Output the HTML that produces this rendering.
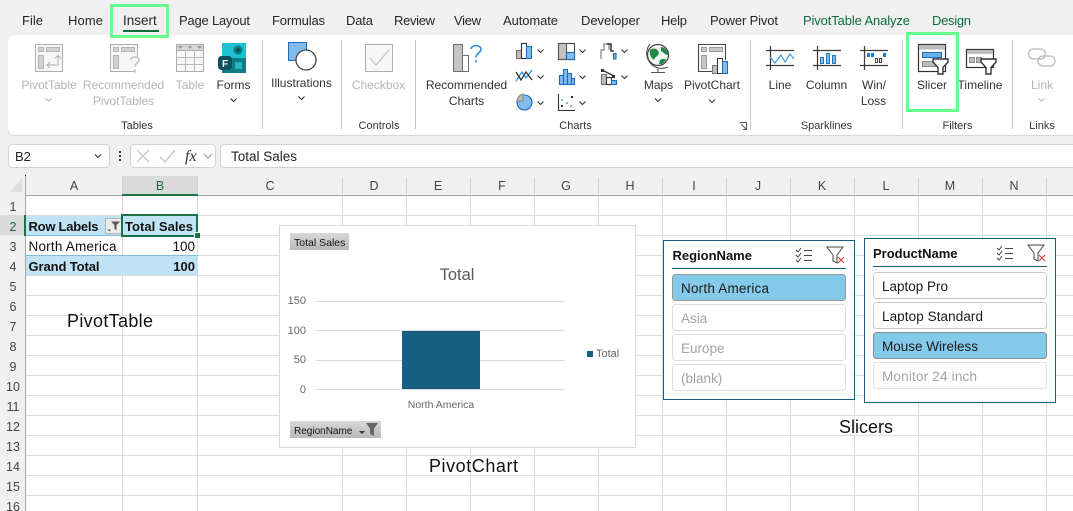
<!DOCTYPE html>
<html lang="en"><head><meta charset="utf-8"><title>Excel PivotTable</title>
<style>
html,body{margin:0;padding:0;width:1073px;height:511px;overflow:hidden;background:#f0f0f0}
svg{display:block}
text{font-family:"Liberation Sans",sans-serif;white-space:pre}
.tab{font-size:13px;fill:#262626}
.rb{font-size:12px;fill:#333;text-anchor:middle}
.dis{font-size:12px;fill:#b4b4b4;text-anchor:middle}
.gr{font-size:11px;fill:#333;text-anchor:middle}
.hd{font-size:12.5px;fill:#444;text-anchor:middle}
.c{font-size:13.5px;fill:#111}
.b{font-size:13px;fill:#111;font-weight:bold}
.ax{font-size:11px;fill:#666}
.sl{font-size:13.5px;fill:#1a1a1a}
.sd{font-size:13.5px;fill:#a3a3a3}
.big{font-size:18px;fill:#111;text-anchor:middle}
</style></head><body>
<svg width="1073" height="511" viewBox="0 0 1073 511" xmlns="http://www.w3.org/2000/svg">
<defs>
<path id="ch" d="M-3-1.500 0 1.500 3-1.500" fill="none" stroke="#333" stroke-width="1.100"/>
<path id="chg" d="M-3-1.500 0 1 3-1.500" fill="none" stroke="#b5b5b5" stroke-width="1.100"/>
<g id="funnel"><path d="M0 0H15V3L10 8.500V15H5V8.500L0 3Z" fill="#fff" stroke="#333" stroke-width="1.400"/></g>
<g id="sfx" fill="none" stroke-width="1"><path d="M0 0H16L10 8V16L6 14V8Z" stroke="#444"/><path d="M11 10l6 6M17 10l-6 6" stroke="#e8404a" stroke-width="1.200"/></g>
<g id="clr" fill="none" stroke="#444" stroke-width="1"><path d="M0 2l2 2 3-4M0 7l2 2 3-4M0 12l2 2 3-4"/><path d="M8 2.500H16M8 7.500H16M8 12.500H16"/></g>
<linearGradient id="btn" x1="0" y1="0" x2="0" y2="1"><stop offset="0" stop-color="#d8d8d8"/><stop offset="1" stop-color="#b8b8b8"/></linearGradient>
</defs>

<rect width="1073" height="511" fill="#f0f0f0"/>

<!-- tabs -->
<text class="tab" x="22" y="25">File</text>
<text class="tab" x="68" y="25" textLength="35">Home</text>
<text class="tab" x="123" y="25" style="font-size:13.500px">Insert</text>
<text class="tab" x="179" y="25" textLength="71">Page Layout</text>
<text class="tab" x="272" y="25" textLength="53">Formulas</text>
<text class="tab" x="346" y="25" textLength="27">Data</text>
<text class="tab" x="394" y="25" textLength="41">Review</text>
<text class="tab" x="454" y="25" textLength="27">View</text>
<text class="tab" x="503" y="25" textLength="55">Automate</text>
<text class="tab" x="581" y="25" textLength="59">Developer</text>
<text class="tab" x="661" y="25" textLength="26">Help</text>
<text class="tab" x="710" y="25" textLength="68">Power Pivot</text>
<text class="tab" x="803" y="25" textLength="107" style="fill:#0e6b3c">PivotTable Analyze</text>
<text class="tab" x="932" y="25" textLength="39" style="fill:#0e6b3c">Design</text>
<rect x="123" y="30" width="36" height="2" fill="#0e6b3c"/>

<!-- ribbon panel -->
<rect x="8" y="35" width="1080" height="100" rx="7" fill="#fff"/>
<path d="M8 130Q8 135.500 15 135.500H1073" fill="none" stroke="#d8d8d8"/>
<g stroke="#c9c9c9"><path d="M262.500 40V129M341.500 40V129M415.500 40V129M750.500 40V129M902.500 40V129M1012.500 40V129"/></g>

<!-- PivotTable icon -->
<g>
<rect x="35.500" y="44.500" width="27" height="27" fill="#f7f7f7" stroke="#aeaeae"/>
<g fill="#d2d2d2" stroke="#b5b5b5"><rect x="38.500" y="47.500" width="5" height="4"/><rect x="46.500" y="47.500" width="13" height="4"/><rect x="38.500" y="55.500" width="5" height="13"/></g>
<path d="M47 65H58V56M55 58.500 58 55.500 61 58.500M50 62 47 65 50 68" fill="none" stroke="#b0b0b0"/>
</g>
<!-- Recommended PivotTables icon -->
<g>
<path d="M134 71.500H110.500V44.500H137.500V58" fill="#f7f7f7" stroke="#aeaeae"/>
<g fill="#d2d2d2" stroke="#b5b5b5"><rect x="113.500" y="47.500" width="5" height="4"/><rect x="121.500" y="47.500" width="13" height="4"/><rect x="113.500" y="55.500" width="5" height="13"/></g>
<path d="M131 60C131 56 139 56 139 60C139 63 135 63 135 67M135 69.500V72.500" fill="none" stroke="#c0c0c0" stroke-width="1.500"/>
</g>
<!-- Table icon -->
<g>
<rect x="176.500" y="44.500" width="27" height="27" fill="#f7f7f7" stroke="#aeaeae"/>
<rect x="176.500" y="44.500" width="27" height="6" fill="#d6d6d6" stroke="#aeaeae"/>
<path d="M176.500 57.500H203.500M176.500 64.500H203.500M185.500 50V71M194.500 50V71" stroke="#b8b8b8"/>
<path d="M178 46h5l-2.500 3zM187.500 46h5l-2.500 3zM197 46h5l-2.500 3z" fill="#999"/>
</g>
<!-- Forms icon -->
<g>
<path d="M222 43H246V73H222Z" fill="#0f7b86"/>
<path d="M224 43H246V58H222V45Q222 43 224 43Z" fill="#20bfd2"/>
<circle cx="238" cy="50" r="4.500" fill="#0f7b86"/><circle cx="238" cy="50" r="2" fill="#0b5563"/>
<rect x="235" y="62" width="7" height="7" fill="#25b3c0"/>
<rect x="218" y="56" width="14" height="14" rx="3.500" fill="#0c4f5d"/>
<text x="222" y="67" style="font-size:10px;font-weight:bold;fill:#fff">F</text>
</g>
<!-- Illustrations -->
<rect x="288.500" y="42.500" width="18" height="18" fill="#85bbec" stroke="#1a6cbd"/>
<circle cx="306" cy="60" r="10" fill="#fff" stroke="#444" stroke-width="1.300"/>
<!-- Checkbox -->
<rect x="365.500" y="44.500" width="27" height="27" fill="#f7f7f7" stroke="#aeaeae"/>
<path d="M370 58 376 65 389 50" fill="none" stroke="#c4c4c4" stroke-width="1.300"/>
<!-- Recommended charts -->
<rect x="453.500" y="44.500" width="9" height="27" fill="#c4c4c4" stroke="#6d6d6d"/>
<rect x="462.500" y="55.500" width="6" height="16" fill="#fff" stroke="#6d6d6d"/>
<path d="M471 49C471 44.500 481 44.500 481 49C481 53 476 53 476 57.500M476 60V62.500" fill="none" stroke="#2e8fdc" stroke-width="1.600"/>

<!-- small chart icons -->
<g stroke-width="1.100">
<g>
<rect x="516.500" y="50.500" width="5" height="8" fill="#bdbdbd" stroke="#777"/>
<rect x="521.500" y="43.500" width="5" height="15" fill="#fff" stroke="#333"/>
<rect x="526.500" y="46.500" width="5" height="12" fill="#82bcec" stroke="#1a6cbd"/>
</g>
<g fill="none">
<path d="M516 81 522 72 526 78 532 70" stroke="#2e8fdc" stroke-width="1.300"/>
<path d="M516 72 521 80 526 72 532 80" stroke="#333" stroke-width="1.300"/>
</g>
<g>
<circle cx="524.500" cy="102.500" r="7.500" fill="#82bcec" stroke="#1a6cbd"/>
<path d="M523 101V94A7.500 7.500 0 0 0 517 101Z" fill="#bdbdbd" stroke="#888"/>
</g>
<g>
<rect x="558.500" y="43.500" width="16" height="16" fill="#fff" stroke="#444"/>
<rect x="558.500" y="43.500" width="8" height="16" fill="#c2c2c2" stroke="#555"/>
<rect x="566.500" y="52.500" width="8" height="7" fill="#82bcec" stroke="#1a6cbd"/>
</g>
<g>
<rect x="559.500" y="75.500" width="4" height="9" fill="#82bcec" stroke="#1a6cbd"/>
<rect x="563.500" y="69.500" width="4" height="15" fill="#82bcec" stroke="#1a6cbd"/>
<rect x="567.500" y="73.500" width="4" height="11" fill="#82bcec" stroke="#1a6cbd"/>
<rect x="571.500" y="78.500" width="3" height="6" fill="#82bcec" stroke="#1a6cbd"/>
</g>
<g>
<path d="M558.500 94V110.500H575" fill="none" stroke="#333"/>
<rect x="561" y="105" width="2" height="2" fill="#333"/><rect x="571" y="96" width="2" height="2" fill="#333"/>
<rect x="566" y="102" width="2" height="2" fill="#82bcec"/><rect x="561" y="99" width="2" height="2" fill="#82bcec"/><rect x="570" y="105" width="2" height="2" fill="#82bcec"/>
</g>
<g fill="none">
<path d="M601 59V50H604V44H609V50" stroke="#999" stroke-width="1.500"/>
<path d="M607 44H611V51H614" stroke="#333" stroke-width="1.500"/>
<rect x="613.500" y="53.500" width="2.500" height="5.500" fill="#82bcec" stroke="#1a6cbd"/>
</g>
<g>
<rect x="601.500" y="74.500" width="5" height="10" fill="#bdbdbd" stroke="#777"/>
<rect x="606.500" y="77.500" width="5" height="7" fill="#fff" stroke="#333"/>
<rect x="611.500" y="80.500" width="5" height="4" fill="#82bcec" stroke="#1a6cbd"/>
<path d="M602 70 614 76" stroke="#333" stroke-width="1.300" fill="none"/>
<rect x="601" y="69" width="3" height="3" fill="#333"/><rect x="612" y="75" width="3" height="3" fill="#333"/>
</g>
</g>
<g>
<use href="#ch" x="540.500" y="51"/><use href="#ch" x="540.500" y="77"/><use href="#ch" x="540.500" y="103"/>
<use href="#ch" x="582.500" y="51"/><use href="#ch" x="582.500" y="77"/><use href="#ch" x="582.500" y="103"/>
<use href="#ch" x="624.500" y="51"/><use href="#ch" x="624.500" y="77"/>
</g>

<!-- Maps globe -->
<circle cx="658" cy="55" r="10.500" fill="#f2f7f2" stroke="#3f3f3f" stroke-width="1.200"/>
<path d="M650 50C654 47 658 49 659 53C658 57 655 56 654 60C651 58 649 54 650 50ZM661 47C665 47 668 51 668 55C665 55 663 52 661 51ZM660 60C663 58 666 59 666 60C664 63 661 65 659 64Z" fill="#1f8a45"/>
<path d="M650 44A15 15 0 0 0 668 67M658 69V72M651 72.500H665" fill="none" stroke="#555" stroke-width="1.100"/>

<!-- PivotChart icon -->
<path d="M714 71.500H698.500V44.500H725.500V60" fill="#fbfbfb" stroke="#444" stroke-width="1.100"/>
<g fill="#c8c8c8" stroke="#999"><rect x="701.500" y="47.500" width="5" height="4"/><rect x="709.500" y="47.500" width="13" height="4"/><rect x="701.500" y="55.500" width="5" height="13"/></g>
<rect x="712.500" y="65.500" width="5" height="8" fill="#bdbdbd" stroke="#777"/>
<rect x="717.500" y="58.500" width="5" height="15" fill="#fff" stroke="#333"/>
<rect x="722.500" y="61.500" width="5" height="12" fill="#82bcec" stroke="#1a6cbd"/>

<!-- Sparklines -->
<g stroke="#3a3a3a" stroke-width="1.200" fill="none">
<path d="M766 50.500H794M766 65.500H794M770.500 46V70"/>
<path d="M813 50.500H841M813 65.500H841M817.500 46V70"/>
<path d="M860 50.500H888M860 65.500H888M864.500 46V70"/>
</g>
<path d="M770 57 775 63 781 55 785 62 790 54 794 59" fill="none" stroke="#3d97e0" stroke-width="1.200"/>
<g fill="#82bcec" stroke="#1a7cc8">
<rect x="820.500" y="57.500" width="3" height="6"/><rect x="826.500" y="53.500" width="3" height="10"/><rect x="832.500" y="55.500" width="3" height="8"/>
<rect x="867.500" y="53.500" width="2" height="3" fill="#2e7cc8"/><rect x="871.500" y="53.500" width="2" height="3" fill="#2e7cc8"/><rect x="883.500" y="53.500" width="2" height="3" fill="#2e7cc8"/>
</g>
<g fill="none" stroke="#444"><rect x="875.500" y="58.500" width="2" height="4"/><rect x="879.500" y="58.500" width="2" height="4"/></g>

<!-- Slicer icon -->
<rect x="918.500" y="44.500" width="27" height="27" fill="#fff" stroke="#333" stroke-width="1.200"/>
<rect x="919" y="45" width="26" height="4.500" fill="#bdbdbd"/>
<rect x="922.500" y="52.500" width="19" height="5" fill="#6fb0ea" stroke="#1a6cbd"/>
<rect x="922.500" y="61.500" width="13" height="5" fill="#bdbdbd" stroke="#8a8a8a"/>
<use href="#funnel" x="933" y="59"/>
<!-- Timeline icon -->
<rect x="966.500" y="49.500" width="27" height="18" fill="#fff" stroke="#333" stroke-width="1.200"/>
<rect x="967" y="50" width="26" height="4" fill="#bdbdbd"/>
<rect x="969.500" y="57.500" width="5" height="5" fill="#bdbdbd" stroke="#8a8a8a"/>
<rect x="976.500" y="57.500" width="5" height="5" fill="#bdbdbd" stroke="#8a8a8a"/>
<use href="#funnel" x="981" y="59"/>
<!-- Link icon -->
<g fill="none" stroke="#c4c4c4" stroke-width="1.500">
<rect x="1028.500" y="49" width="17" height="10" rx="5"/>
<rect x="1038" y="56" width="17" height="10" rx="5"/>
</g>

<!-- ribbon labels -->
<text class="dis" x="49" y="89">PivotTable</text><use href="#chg" x="48.500" y="100"/>
<text class="dis" x="123.500" y="89">Recommended</text><text class="dis" x="123.500" y="105">PivotTables</text>
<text class="dis" x="190" y="89">Table</text>
<text class="rb" x="233.500" y="89">Forms</text><use href="#ch" x="233.500" y="100"/>
<text class="rb" x="301.500" y="87">Illustrations</text><use href="#ch" x="301.500" y="98"/>
<text class="dis" x="378.500" y="89">Checkbox</text>
<text class="rb" x="466.500" y="89">Recommended</text><text class="rb" x="466.500" y="105">Charts</text>
<text class="rb" x="658.500" y="89">Maps</text><use href="#ch" x="658" y="100"/>
<text class="rb" x="712" y="89">PivotChart</text><use href="#ch" x="712" y="101"/>
<text class="rb" x="780" y="89">Line</text>
<text class="rb" x="826.500" y="89">Column</text>
<text class="rb" x="874" y="89">Win/</text><text class="rb" x="873.500" y="105">Loss</text>
<text class="rb" x="932" y="89">Slicer</text>
<text class="rb" x="980" y="89">Timeline</text>
<text class="dis" x="1042" y="89">Link</text><use href="#chg" x="1041.500" y="100"/>
<text class="gr" x="137" y="129">Tables</text>
<text class="gr" x="379" y="129">Controls</text>
<text class="gr" x="575.500" y="129">Charts</text>
<text class="gr" x="826.500" y="129">Sparklines</text>
<text class="gr" x="957.500" y="129">Filters</text>
<text class="gr" x="1042" y="129">Links</text>
<path d="M739.500 122.500H746.500V129.500M741 124 746 129M743 129.500H746.500V126" fill="none" stroke="#555"/>

<!-- green highlights -->
<rect x="111.500" y="5.500" width="56" height="31" fill="none" stroke="#66ff8c" stroke-width="3"/>
<rect x="907.500" y="33.500" width="50" height="77" fill="none" stroke="#66ff8c" stroke-width="3"/>

<!-- formula bar -->
<rect x="8.500" y="144.500" width="101" height="23" rx="4" fill="#fff" stroke="#d2d2d2"/>
<text x="15" y="161" style="font-size:13px;fill:#222">B2</text>
<use href="#ch" x="98" y="156"/>
<g fill="#333"><rect x="119" y="151" width="2" height="2"/><rect x="119" y="155" width="2" height="2"/><rect x="119" y="159" width="2" height="2"/></g>
<rect x="130.500" y="144.500" width="85" height="23" rx="4" fill="#fff" stroke="#d2d2d2"/>
<path d="M137 150 149 162M149 150 137 162M160 157 165 162 175 150" fill="none" stroke="#bdbdbd" stroke-width="1.200"/>
<text x="185" y="161" style="font-family:'Liberation Serif',serif;font-style:italic;font-size:16px;fill:#333">fx</text>
<path d="M204 154 208 158 212 154" fill="none" stroke="#999" stroke-width="1.100"/>
<rect x="220.500" y="144.500" width="870" height="23" rx="4" fill="#fff" stroke="#d2d2d2"/>
<text x="231" y="161" style="font-size:13.500px;fill:#222">Total Sales</text>

<!-- grid -->
<rect x="25" y="195" width="1048" height="316" fill="#fff"/>
<g stroke="#dcdcdc">
<path d="M26 215.500H1073M26 235.500H1073M26 255.500H1073M26 275.500H1073M26 295.500H1073M26 315.500H1073M26 335.500H1073M26 355.500H1073M26 375.500H1073M26 395.500H1073M26 415.500H1073M26 435.500H1073M26 455.500H1073M26 475.500H1073M26 495.500H1073"/>
<path d="M122.500 195V511M197.500 195V511M342.500 195V511M406.500 195V511M470.500 195V511M534.500 195V511M598.500 195V511M662.500 195V511M726.500 195V511M790.500 195V511M854.500 195V511M918.500 195V511M982.500 195V511M1046.500 195V511"/>
</g>

<!-- column headers -->
<rect x="122" y="176" width="76" height="19" fill="#dadada"/>
<g stroke="#d0d0d0"><path d="M122.500 178V194M197.500 178V194M342.500 178V194M406.500 178V194M470.500 178V194M534.500 178V194M598.500 178V194M662.500 178V194M726.500 178V194M790.500 178V194M854.500 178V194M918.500 178V194M982.500 178V194M1046.500 178V194"/></g>
<path d="M25 195.500H1073" stroke="#a6a6a6"/>
<rect x="122" y="194" width="76" height="2" fill="#1e7145"/>
<path d="M25.500 176V511" stroke="#a6a6a6"/>
<path d="M22 178V192H10Z" fill="#dedede"/>
<rect x="25" y="175" width="1" height="1" fill="#222"/>
<g>
<text class="hd" x="74" y="190">A</text><text class="hd" x="160" y="190" style="fill:#1e6b42">B</text><text class="hd" x="270" y="190">C</text><text class="hd" x="374" y="190">D</text><text class="hd" x="438" y="190">E</text><text class="hd" x="502" y="190">F</text><text class="hd" x="566" y="190">G</text><text class="hd" x="630" y="190">H</text><text class="hd" x="694" y="190">I</text><text class="hd" x="758" y="190">J</text><text class="hd" x="822" y="190">K</text><text class="hd" x="886" y="190">L</text><text class="hd" x="950" y="190">M</text><text class="hd" x="1014" y="190">N</text>
</g>
<!-- row headers -->
<rect x="0" y="215" width="25" height="20" fill="#dadada"/>
<rect x="24" y="215" width="2" height="21" fill="#1e7145"/>
<g>
<text class="hd" x="13" y="211">1</text><text class="hd" x="13" y="231" style="fill:#1e6b42">2</text><text class="hd" x="13" y="251">3</text><text class="hd" x="13" y="271">4</text><text class="hd" x="13" y="291">5</text><text class="hd" x="13" y="311">6</text><text class="hd" x="13" y="331">7</text><text class="hd" x="13" y="351">8</text><text class="hd" x="13" y="371">9</text><text class="hd" x="13" y="391">10</text><text class="hd" x="13" y="411">11</text><text class="hd" x="13" y="431">12</text><text class="hd" x="13" y="451">13</text><text class="hd" x="13" y="471">14</text><text class="hd" x="13" y="491">15</text><text class="hd" x="13" y="511">16</text>
</g>

<!-- pivot table -->
<rect x="26" y="216" width="172" height="19" fill="#c0e4f5"/>
<rect x="26" y="256" width="172" height="19" fill="#c0e4f5"/>
<path d="M26 235.500H198M26 255.500H198" stroke="#80bde0"/>
<text class="b" x="28.500" y="231" textLength="70">Row Labels</text>
<text class="b" x="125" y="231" textLength="68">Total Sales</text>
<rect x="105.500" y="218.500" width="16" height="15" fill="#ececec" stroke="#b4b4b4"/>
<path d="M111 221.500H120L116.500 225V230L114.500 229V225Z" fill="#555"/>
<path d="M107.500 229.500H111L109.250 231.500Z" fill="#555"/>
<rect x="122" y="215" width="75" height="21" fill="none" stroke="#1e7145" stroke-width="2"/>
<rect x="194.500" y="232.500" width="6" height="6" fill="#1e7145" stroke="#fff"/>
<text class="c" x="28.500" y="251" textLength="88">North America</text>
<text class="c" x="195" y="251" text-anchor="end">100</text>
<text class="b" x="28.500" y="271" textLength="71">Grand Total</text>
<text class="b" x="195" y="271" text-anchor="end">100</text>

<text class="big" x="110" y="327" textLength="86">PivotTable</text>

<!-- chart -->
<rect x="279.500" y="225.500" width="356" height="222" fill="#fff" stroke="#d9d9d9"/>
<rect x="290" y="233" width="59" height="17" fill="url(#btn)"/>
<text x="294" y="246" style="font-size:10.500px;fill:#111">Total Sales</text>
<text x="457" y="280" text-anchor="middle" style="font-size:16.500px;fill:#595959">Total</text>
<path d="M316 301.500H565M316 330.500H565M316 360.500H565M316 389.500H565" stroke="#d9d9d9"/>
<rect x="402" y="331" width="78" height="58" fill="#156082"/>
<text class="ax" x="306" y="304" text-anchor="end">150</text>
<text class="ax" x="306" y="334" text-anchor="end">100</text>
<text class="ax" x="306" y="363" text-anchor="end">50</text>
<text class="ax" x="306" y="393" text-anchor="end">0</text>
<text class="ax" x="441" y="408" text-anchor="middle" style="font-size:10.500px">North America</text>
<rect x="587" y="351" width="6" height="6" fill="#156082"/>
<text x="596" y="357" style="font-size:11px;fill:#666">Total</text>
<rect x="290" y="421" width="91" height="17" fill="url(#btn)"/>
<text x="294" y="434" style="font-size:10px;fill:#111">RegionName</text>
<path d="M359 431H365L362 434Z" fill="#333"/>
<path d="M366 423H378L374 428.500V436L370 434V428.500Z" fill="#666"/>
<text class="big" x="473.500" y="472" textLength="89">PivotChart</text>

<!-- slicer 1 -->
<rect x="663.500" y="240.500" width="191" height="159" fill="#fff" stroke="#156082"/>
<text x="672.500" y="260" style="font-size:13px;font-weight:bold;fill:#111">RegionName</text>
<use href="#clr" x="796" y="248"/>
<use href="#sfx" x="827" y="247"/>
<path d="M672 268.500H846" stroke="#156082"/>
<rect x="672.500" y="274.500" width="173" height="26" rx="3" fill="#83caeb" stroke="#9a9a9a"/>
<text class="sl" x="681" y="293" textLength="88">North America</text>
<rect x="672.500" y="304.500" width="173" height="26" rx="3" fill="#fff" stroke="#dedede"/>
<text class="sd" x="681" y="323">Asia</text>
<rect x="672.500" y="334.500" width="173" height="26" rx="3" fill="#fff" stroke="#dedede"/>
<text class="sd" x="681" y="353">Europe</text>
<rect x="672.500" y="364.500" width="173" height="26" rx="3" fill="#fff" stroke="#dedede"/>
<text class="sd" x="681" y="383">(blank)</text>

<!-- slicer 2 -->
<rect x="864.500" y="238.500" width="191" height="164" fill="#fff" stroke="#156082"/>
<text x="873" y="258" style="font-size:13px;font-weight:bold;fill:#111">ProductName</text>
<use href="#clr" x="997" y="246"/>
<use href="#sfx" x="1028" y="245"/>
<path d="M873 266.500H1047" stroke="#156082"/>
<rect x="873.500" y="272.500" width="173" height="26" rx="3" fill="#fff" stroke="#c8c8c8"/>
<text class="sl" x="882" y="291">Laptop Pro</text>
<rect x="873.500" y="302.500" width="173" height="26" rx="3" fill="#fff" stroke="#c8c8c8"/>
<text class="sl" x="882" y="321" textLength="101">Laptop Standard</text>
<rect x="873.500" y="332.500" width="173" height="26" rx="3" fill="#83caeb" stroke="#8a8a8a"/>
<text class="sl" x="882" y="351" textLength="96">Mouse Wireless</text>
<rect x="873.500" y="362.500" width="173" height="26" rx="3" fill="#fff" stroke="#dedede"/>
<text class="sd" x="882" y="381" textLength="95">Monitor 24 inch</text>

<text class="big" x="866" y="433" textLength="54">Slicers</text>
</svg>
</body></html>
